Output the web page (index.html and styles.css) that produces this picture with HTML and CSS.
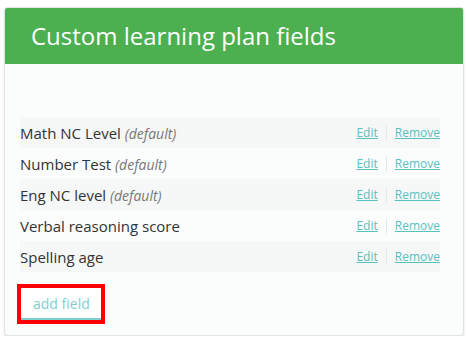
FILE: index.html
```html
<!DOCTYPE html>
<html>
<head>
<meta charset="utf-8">
<link rel="stylesheet" href="styles.css">
</head>
<body>
<div class="card">
  <div class="card-header">Custom learning plan fields</div>
  <div class="card-body">
    <ul class="fields">
      <li class="field"><span class="name">Math NC Level <em>(default)</em></span><span class="actions"><a href="#">Edit</a><span class="sep"></span><a href="#">Remove</a></span></li>
      <li class="field"><span class="name">Number Test <em>(default)</em></span><span class="actions"><a href="#">Edit</a><span class="sep"></span><a href="#">Remove</a></span></li>
      <li class="field"><span class="name">Eng NC level <em>(default)</em></span><span class="actions"><a href="#">Edit</a><span class="sep"></span><a href="#">Remove</a></span></li>
      <li class="field"><span class="name">Verbal reasoning score</span><span class="actions"><a href="#">Edit</a><span class="sep"></span><a href="#">Remove</a></span></li>
      <li class="field"><span class="name">Spelling age</span><span class="actions"><a href="#">Edit</a><span class="sep"></span><a href="#">Remove</a></span></li>
    </ul>
    <div class="highlight"><button class="add-btn">add field</button></div>
  </div>
</div>
</body>
</html>
```

FILE: styles.css
```css
html, body {
  margin: 0;
  padding: 0;
  background: #ffffff;
  font-family: "Open Sans", "DejaVu Sans", sans-serif;
}
.card {
  margin: 7px 0 0 4px;
  width: 458px;
  border: 1px solid #e2e4e4;
  border-radius: 3px;
  background: #fbfcfc;
  box-shadow: 0 2px 2px rgba(0,0,0,0.12);
}
.card-header {
  background: #4caf50;
  color: #ffffff;
  height: 56px;
  line-height: 56px;
  padding-left: 26px;
  font-size: 24px;
  border-radius: 2px 2px 0 0;
}
.card-body {
  padding: 53px 23px 11px 15px;
}
.fields {
  list-style: none;
  margin: 0;
  padding: 0;
}
.field {
  display: flex;
  align-items: center;
  justify-content: space-between;
  height: 31px;
  color: #333333;
  font-size: 15px;
}
.field:nth-child(odd) {
  background: #f6f7f7;
}
.field em {
  color: #777777;
  font-size: 14px;
}
.actions {
  display: flex;
  align-items: center;
  font-size: 12px;
}
.actions a {
  color: #5bc0be;
  text-decoration: underline;
}
.sep {
  width: 1px;
  height: 16px;
  background: #e6e8e8;
  margin: 0 8px;
}
.highlight {
  display: inline-block;
  margin-top: 12px;
  margin-left: -3px;
  border: 4px solid #ff0000;
  vertical-align: top;
}
.add-btn {
  display: block;
  width: 80px;
  height: 32px;
  border: none;
  border-bottom: 2px solid #7ecfcd;
  background: #ffffff;
  color: #7ecfcd;
  font-family: "Open Sans", "DejaVu Sans", sans-serif;
  font-size: 14px;
  text-align: left;
  padding: 0 0 0 12px;
}
```
